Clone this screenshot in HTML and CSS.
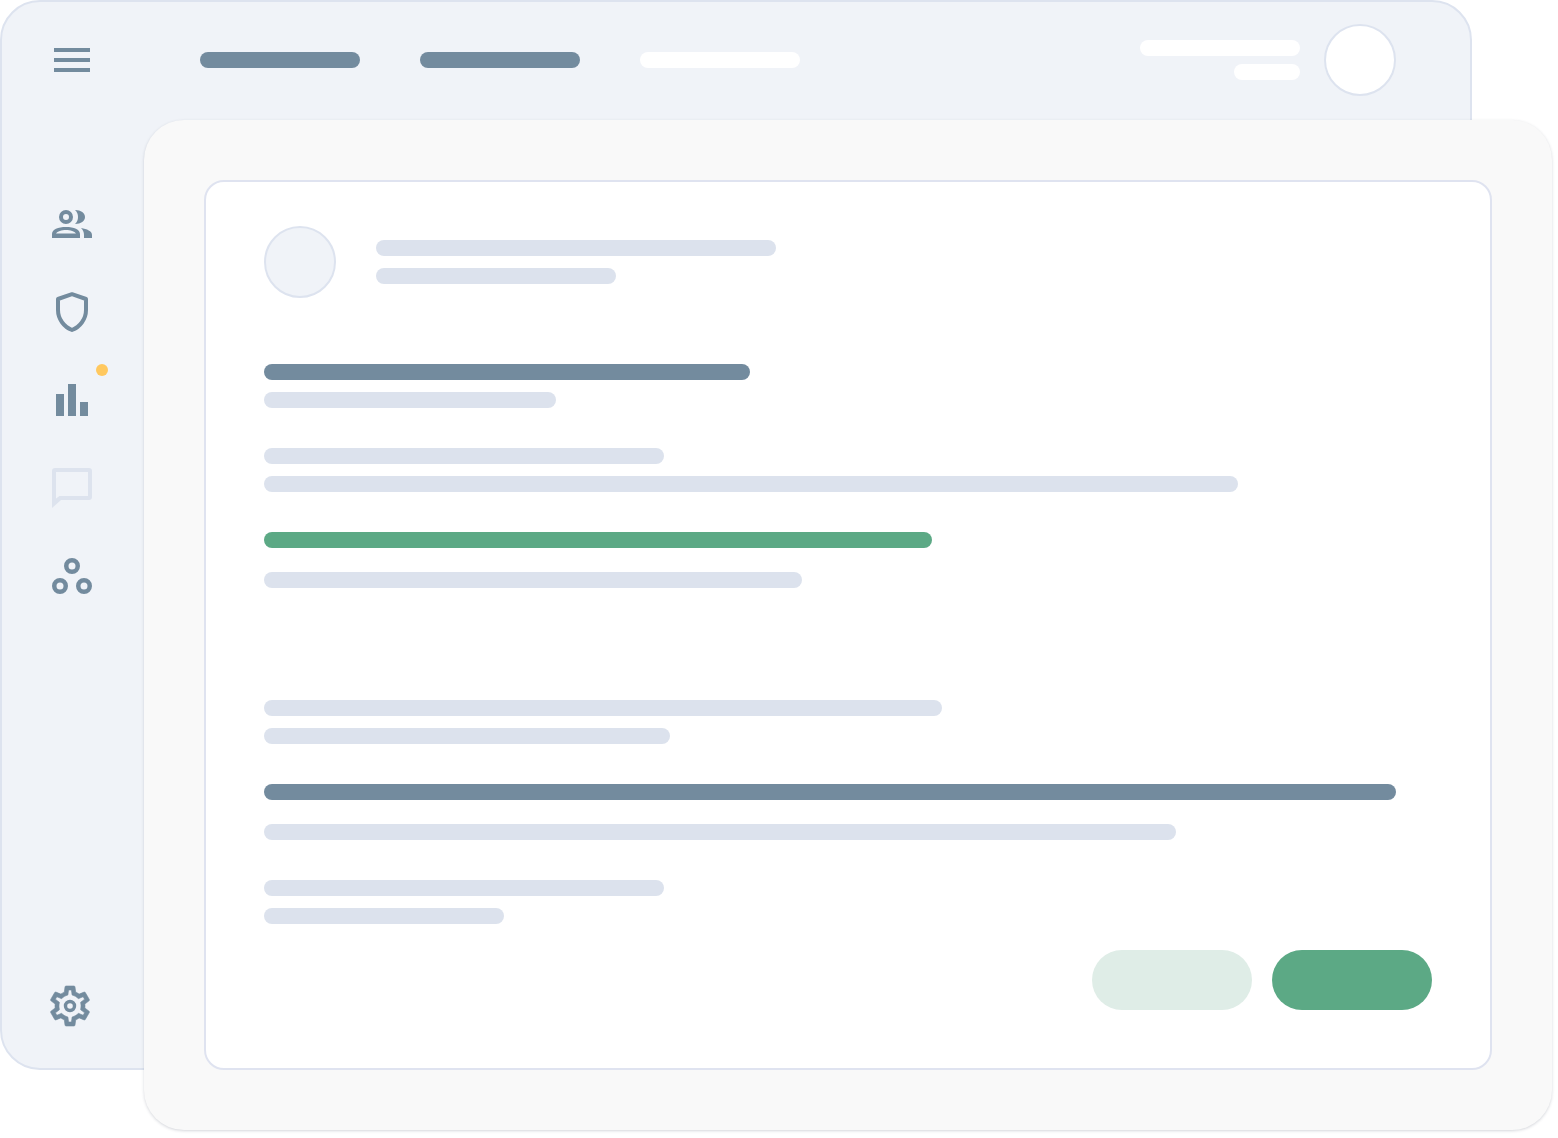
FILE: index.html
```html
<!DOCTYPE html>
<html lang="en">
<head>
<meta charset="utf-8">
<title>Dashboard skeleton</title>
<link rel="stylesheet" href="styles.css">
</head>
<body>
<div class="stage">
  <section class="window-back">
    <header class="topbar">
      <div class="burger"><span></span><span></span><span></span></div>
      <nav class="topnav">
        <span class="bar bar-slate nav-item"></span>
        <span class="bar bar-slate nav-item"></span>
        <span class="bar bar-white nav-item"></span>
      </nav>
      <div class="account">
        <div class="account-lines">
          <span class="bar bar-white account-name"></span>
          <span class="bar bar-white account-role"></span>
        </div>
        <div class="account-avatar"></div>
      </div>
    </header>
    <aside class="sidebar">
      <div class="slot">
        <svg class="icon" width="40" height="28" viewBox="0 0 40 28">
          <circle class="stroke" cx="14" cy="7" r="5" stroke-width="4"/>
          <path class="fill" d="M23 0C29 0 33 3 33 7S29 14 23 14C25.200 12.200 26 9.600 26 7S25.200 1.800 23 0Z"/>
          <path class="fill" fill-rule="evenodd" d="M0 28V24C0 19.500 6 17 14 17S28 19.500 28 24V28ZM4 23.500H24C22.500 21.200 18.500 20 14 20S5.500 21.200 4 23.500Z"/>
          <path class="fill" d="M29 18C35 19 40 21 40 25V28H32V25C32 22 31 20 29 18Z"/>
        </svg>
      </div>
      <div class="slot">
        <svg class="icon" width="32" height="40" viewBox="0 0 32 40">
          <path class="stroke" stroke-width="4" stroke-linejoin="round" d="M16 2.200 2 7V18C2 27 8 35 16 38C24 35 30 27 30 18V7Z"/>
        </svg>
      </div>
      <div class="slot slot-badged">
        <svg class="icon" width="32" height="32" viewBox="0 0 32 32">
          <rect class="fill" x="0" y="10" width="8" height="22"/>
          <rect class="fill" x="12" y="0" width="8" height="32"/>
          <rect class="fill" x="24" y="18" width="8" height="14"/>
        </svg>
        <span class="badge"></span>
      </div>
      <div class="slot">
        <svg class="icon" width="40" height="40" viewBox="0 0 40 40">
          <path class="fill-light" fill-rule="evenodd" d="M3 0H37A3 3 0 0 1 40 3V29A3 3 0 0 1 37 32H9L0 40V3A3 3 0 0 1 3 0ZM4 4V30.500L7.500 28H36V4Z"/>
        </svg>
      </div>
      <div class="slot">
        <svg class="icon" width="40" height="36" viewBox="0 0 40 36">
          <circle class="stroke" cx="20" cy="8" r="5.750" stroke-width="4.500"/>
          <circle class="stroke" cx="8" cy="28" r="5.750" stroke-width="4.500"/>
          <circle class="stroke" cx="32" cy="28" r="5.750" stroke-width="4.500"/>
        </svg>
      </div>
      <svg class="gear" width="48" height="48" viewBox="0 0 24 24">
        <path class="fill gear-body" d="M19.430 12.980c.04-.32.07-.64.07-.98 0-.34-.03-.66-.07-.98l2.110-1.650c.19-.15.24-.42.12-.64l-2-3.460c-.09-.16-.26-.25-.44-.25-.06 0-.12.01-.17.03l-2.490 1c-.52-.4-1.080-.73-1.690-.98l-.38-2.650C14.460 2.180 14.250 2 14 2h-4c-.25 0-.46.18-.49.42l-.38 2.650c-.61.25-1.170.59-1.690.98l-2.490-1c-.06-.02-.12-.03-.18-.03-.17 0-.34.09-.43.25l-2 3.460c-.13.22-.07.49.12.64l2.110 1.650c-.04.32-.07.65-.07.98 0 .33.03.66.07.98l-2.110 1.650c-.19.15-.24.42-.12.64l2 3.460c.09.16.26.25.44.25.06 0 .12-.01.17-.03l2.490-1c.52.4 1.080.73 1.690.98l.38 2.650c.03.24.24.42.49.42h4c.25 0 .46-.18.49-.42l.38-2.650c.61-.25 1.170-.59 1.690-.98l2.490 1c.06.02.12.03.18.03.17 0 .34-.09.43-.25l2-3.460c.12-.22.07-.49-.12-.64l-2.110-1.650zm-1.980-1.710c.04.31.05.52.05.73 0 .21-.02.43-.05.73l-.14 1.130.89.7 1.080.84-.7 1.210-1.270-.51-1.040-.42-.9.68c-.43.32-.84.56-1.250.73l-1.060.43-.16 1.130-.2 1.350h-1.400l-.19-1.350-.16-1.130-1.060-.43c-.43-.18-.83-.41-1.230-.71l-.91-.7-1.060.43-1.270.51-.7-1.210 1.080-.84.89-.7-.14-1.130c-.03-.31-.05-.54-.05-.74s.02-.43.05-.73l.14-1.130-.89-.7-1.080-.84.7-1.210 1.270.51 1.040.42.9-.68c.43-.32.84-.56 1.250-.73l1.060-.43.16-1.130.2-1.350h1.390l.19 1.350.16 1.130 1.060.43c.43.18.83.41 1.230.71l.91.7 1.060-.43 1.270-.51.7 1.210-1.070.85-.89.7.14 1.130z"/>
        <circle class="stroke" cx="12" cy="12" r="2.250" stroke-width="1.700"/>
      </svg>
    </aside>
  </section>

  <section class="window-front">
    <div class="panel">
      <div class="profile">
        <div class="profile-avatar"></div>
        <div class="lines">
          <span class="bar bar-light" style="width:400px"></span>
          <span class="bar bar-light" style="width:240px"></span>
        </div>
      </div>
      <div class="lines gap-66">
        <span class="bar bar-slate" style="width:486px"></span>
        <span class="bar bar-light" style="width:292px"></span>
      </div>
      <div class="lines gap-40">
        <span class="bar bar-light" style="width:400px"></span>
        <span class="bar bar-light" style="width:974px"></span>
      </div>
      <div class="lines lines-wide gap-40">
        <span class="bar bar-green" style="width:668px"></span>
        <span class="bar bar-light" style="width:538px"></span>
      </div>
      <div class="lines gap-112">
        <span class="bar bar-light" style="width:678px"></span>
        <span class="bar bar-light" style="width:406px"></span>
      </div>
      <div class="lines lines-wide gap-40">
        <span class="bar bar-slate" style="width:1132px"></span>
        <span class="bar bar-light" style="width:912px"></span>
      </div>
      <div class="lines gap-40">
        <span class="bar bar-light" style="width:400px"></span>
        <span class="bar bar-light" style="width:240px"></span>
      </div>
      <div class="actions">
        <span class="btn btn-soft"></span>
        <span class="btn btn-solid"></span>
      </div>
    </div>
  </section>
</div>
</body>
</html>
```
FILE: styles.css
```css
* { box-sizing: border-box; }

html, body {
  margin: 0;
  background: #fff;
}

.stage {
  position: relative;
  width: 1558px;
  height: 1138px;
  overflow: hidden;
}

.window-back {
  position: absolute;
  left: 0;
  top: 0;
  width: 1472px;
  height: 1070px;
  display: flex;
  flex-direction: column;
  background: #f0f3f8;
  border: 2px solid #dde3ef;
  border-radius: 40px;
}

.topbar {
  display: flex;
  align-items: center;
  height: 116px;
  padding: 0 74px 0 52px;
  flex: none;
}

.burger {
  display: flex;
  flex-direction: column;
  gap: 6px;
  width: 36px;
  margin-right: 110px;
}

.burger span {
  height: 4px;
  background: #738b9e;
}

.topnav {
  display: flex;
  gap: 60px;
}

.nav-item { width: 160px; }

.account {
  display: flex;
  align-items: center;
  gap: 24px;
  margin-left: auto;
}

.account-lines {
  display: flex;
  flex-direction: column;
  align-items: flex-end;
  gap: 8px;
}

.account-name { width: 160px; }
.account-role { width: 66px; }

.account-avatar {
  width: 72px;
  height: 72px;
  background: #fff;
  border: 2px solid #dde3ef;
  border-radius: 50%;
}

.bar {
  display: block;
  height: 16px;
  border-radius: 8px;
}

.bar-slate { background: #738b9e; }
.bar-white { background: #fff; }
.bar-light { background: #dce2ed; }
.bar-green { background: #5ca985; }

.sidebar {
  flex: 1;
  display: flex;
  flex-direction: column;
  width: 90px;
  padding: 62px 0 38px 50px;
}

.slot {
  position: relative;
  display: flex;
  align-items: center;
  justify-content: center;
  width: 40px;
  height: 88px;
}

.icon { display: block; }

.fill { fill: #738b9e; }
.fill-light { fill: #dde3ee; }
.stroke { fill: none; stroke: #738b9e; }

.gear-body {
  stroke: #738b9e;
  stroke-width: 0.3;
}

.badge {
  position: absolute;
  left: 44px;
  top: 8px;
  width: 12px;
  height: 12px;
  background: #ffc85f;
  border-radius: 50%;
}

.gear {
  display: block;
  flex: none;
  margin: auto 0 0 -6px;
}

.window-front {
  position: absolute;
  left: 144px;
  top: 120px;
  width: 1408px;
  height: 1010px;
  display: flex;
  padding: 60px 60px 60px 60px;
  background: #f9f9f9;
  border-radius: 40px;
  box-shadow: 0 1px 3px rgba(60, 70, 90, 0.22);
}

.panel {
  flex: 1;
  display: flex;
  flex-direction: column;
  padding: 44px 58px 0;
  background: #fff;
  border: 2px solid #dfe3f0;
  border-radius: 20px;
}

.profile {
  display: flex;
  align-items: center;
  gap: 40px;
}

.profile-avatar {
  width: 72px;
  height: 72px;
  background: #f0f3f8;
  border: 2px solid #dde3ef;
  border-radius: 50%;
}

.lines {
  display: flex;
  flex-direction: column;
  gap: 12px;
}

.lines-wide { gap: 24px; }

.gap-40 { margin-top: 40px; }
.gap-66 { margin-top: 66px; }
.gap-112 { margin-top: 112px; }

.actions {
  display: flex;
  justify-content: flex-end;
  gap: 20px;
  margin-top: 26px;
}

.btn {
  display: block;
  width: 160px;
  height: 60px;
  border-radius: 30px;
}

.btn-soft { background: #dfede7; }
.btn-solid { background: #5ca985; }
```
